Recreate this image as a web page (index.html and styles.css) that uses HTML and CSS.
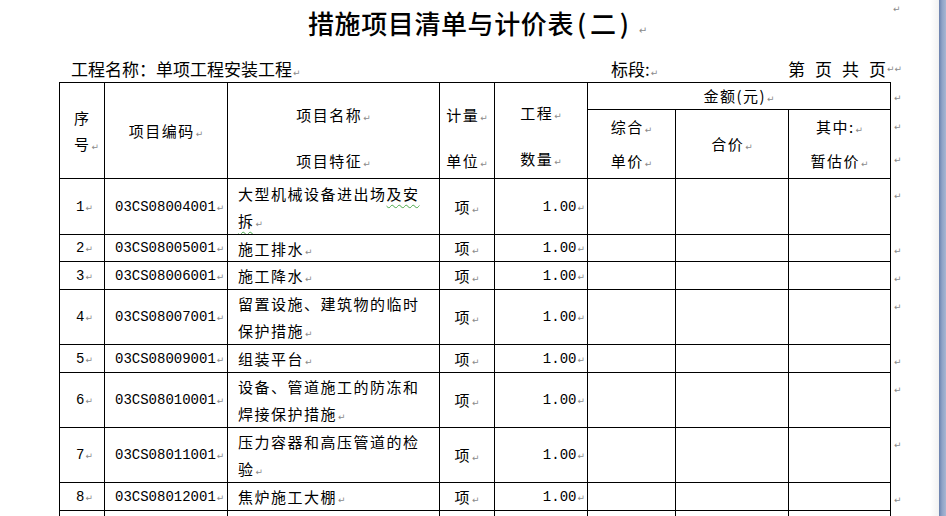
FILE: index.html
```html
<!DOCTYPE html>
<html lang="zh-CN">
<head>
<meta charset="utf-8">
<title>措施项目清单与计价表(二)</title>
<link rel="stylesheet" href="styles.css">
</head>
<body>
<div class="window">
  <main class="page">
    <div class="top-mark"><span class="pm">↵</span></div>
    <h1 class="title">措施项目清单与计价表<span class="paren">(</span>二<span class="paren">)</span><span class="pm">↵</span></h1>
    <div class="meta">
      <div class="meta-project">工程名称：单项工程安装工程<span class="pm">↵</span></div>
      <div class="meta-section">标段:<span class="pm">↵</span></div>
      <div class="meta-page"><span>第</span><span>页</span><span>共</span><span>页</span><span class="pm pm-pair">↵↵</span></div>
    </div>
    <table class="sheet">
      <colgroup>
        <col class="c-no"><col class="c-code"><col class="c-name"><col class="c-unit"><col class="c-qty"><col class="c-price"><col class="c-total"><col class="c-est"><col class="c-rm">
      </colgroup>
      <tr class="hr-a">
        <th rowspan="2" class="h-seq">序<br>号<span class="pm">↵</span></th>
        <th rowspan="2" class="h-code">项目编码<span class="pm">↵</span></th>
        <th rowspan="2" class="h-two"><div class="l1">项目名称<span class="pm">↵</span></div><div class="l2">项目特征<span class="pm">↵</span></div></th>
        <th rowspan="2" class="h-two"><div class="l1">计量<span class="pm">↵</span></div><div class="l2">单位<span class="pm">↵</span></div></th>
        <th rowspan="2" class="h-two h-qty"><div class="l1">工程<span class="pm">↵</span></div><div class="l2">数量<span class="pm">↵</span></div></th>
        <th colspan="3" class="h-amount">金额(元)<span class="pm">↵</span></th>
        <td class="rm rm-a"><span class="pm">↵</span></td>
      </tr>
      <tr class="hr-b">
        <th class="h-sub">综合<span class="pm">↵</span><br>单价<span class="pm">↵</span></th>
        <th class="h-mid">合价<span class="pm">↵</span></th>
        <th class="h-sub">其中:<span class="pm">↵</span><br>暂估价<span class="pm">↵</span></th>
        <td class="rm rm-b"><span class="pm">↵</span><br><span class="pm">↵</span></td>
      </tr>
      <tr class="r-first">
        <td class="no">1<span class="pm">↵</span></td>
        <td class="code">03CS08004001<span class="pm">↵</span></td>
        <td class="name">大型机械设备进出场<span class="spell">及安</span><br><span class="spell">拆</span><span class="pm">↵</span></td>
        <td class="unit">项<span class="pm">↵</span></td>
        <td class="qty">1.00<span class="pm">↵</span></td>
        <td></td><td></td><td></td>
        <td class="rm"><span class="pm">↵</span></td>
      </tr>
      <tr class="r1 r1-short">
        <td class="no">2<span class="pm">↵</span></td>
        <td class="code">03CS08005001<span class="pm">↵</span></td>
        <td class="name">施工排水<span class="pm">↵</span></td>
        <td class="unit">项<span class="pm">↵</span></td>
        <td class="qty">1.00<span class="pm">↵</span></td>
        <td></td><td></td><td></td>
        <td class="rm"><span class="pm">↵</span></td>
      </tr>
      <tr class="r1">
        <td class="no">3<span class="pm">↵</span></td>
        <td class="code">03CS08006001<span class="pm">↵</span></td>
        <td class="name">施工降水<span class="pm">↵</span></td>
        <td class="unit">项<span class="pm">↵</span></td>
        <td class="qty">1.00<span class="pm">↵</span></td>
        <td></td><td></td><td></td>
        <td class="rm"><span class="pm">↵</span></td>
      </tr>
      <tr class="r2">
        <td class="no">4<span class="pm">↵</span></td>
        <td class="code">03CS08007001<span class="pm">↵</span></td>
        <td class="name">留置设施、建筑物的临时<br>保护措施<span class="pm">↵</span></td>
        <td class="unit">项<span class="pm">↵</span></td>
        <td class="qty">1.00<span class="pm">↵</span></td>
        <td></td><td></td><td></td>
        <td class="rm"><span class="pm">↵</span></td>
      </tr>
      <tr class="r1">
        <td class="no">5<span class="pm">↵</span></td>
        <td class="code">03CS08009001<span class="pm">↵</span></td>
        <td class="name">组装平台<span class="pm">↵</span></td>
        <td class="unit">项<span class="pm">↵</span></td>
        <td class="qty">1.00<span class="pm">↵</span></td>
        <td></td><td></td><td></td>
        <td class="rm"><span class="pm">↵</span></td>
      </tr>
      <tr class="r2">
        <td class="no">6<span class="pm">↵</span></td>
        <td class="code">03CS08010001<span class="pm">↵</span></td>
        <td class="name">设备、管道施工的防冻和<br>焊接保护措施<span class="pm">↵</span></td>
        <td class="unit">项<span class="pm">↵</span></td>
        <td class="qty">1.00<span class="pm">↵</span></td>
        <td></td><td></td><td></td>
        <td class="rm"><span class="pm">↵</span></td>
      </tr>
      <tr class="r2">
        <td class="no">7<span class="pm">↵</span></td>
        <td class="code">03CS08011001<span class="pm">↵</span></td>
        <td class="name">压力容器和高压管道的检<br>验<span class="pm">↵</span></td>
        <td class="unit">项<span class="pm">↵</span></td>
        <td class="qty">1.00<span class="pm">↵</span></td>
        <td></td><td></td><td></td>
        <td class="rm"><span class="pm">↵</span></td>
      </tr>
      <tr class="r1">
        <td class="no">8<span class="pm">↵</span></td>
        <td class="code">03CS08012001<span class="pm">↵</span></td>
        <td class="name">焦炉施工大棚<span class="pm">↵</span></td>
        <td class="unit">项<span class="pm">↵</span></td>
        <td class="qty">1.00<span class="pm">↵</span></td>
        <td></td><td></td><td></td>
        <td class="rm"><span class="pm">↵</span></td>
      </tr>
      <tr class="r1">
        <td></td><td></td><td></td><td></td><td></td><td></td><td></td><td></td>
        <td class="rm"></td>
      </tr>
    </table>
  </main>
  <div class="edge"></div>
</div>
</body>
</html>
```
FILE: styles.css
```css
html, body {
  margin: 0;
  padding: 0;
  height: 516px;
  overflow: hidden;
  background: #fff;
}
body {
  font-family: "Noto Sans CJK SC", "Noto Sans", sans-serif;
  color: #000;
}
.window {
  display: flex;
  height: 516px;
}
.page {
  flex: 1;
  min-width: 0;
  padding-left: 59px;
  background: linear-gradient(to right, #fff calc(100% - 9px), #f1f1f1);
}
.edge {
  width: 7px;
  flex: none;
  background: linear-gradient(90deg, #6a80ac 0%, #90a3c7 45%, #a8b6d2 100%);
}
.pm {
  font-family: "DejaVu Sans", sans-serif;
  font-size: 9px;
  font-weight: 400;
  line-height: 0;
  color: #8a8a8a;
  letter-spacing: 0;
  margin-left: 1px;
}
.top-mark {
  height: 8px;
  line-height: 10px;
  padding-left: 833px;
}
.title {
  margin: 0;
  height: 30px;
  line-height: 30px;
  padding-left: 249px;
  font-size: 26px;
  font-weight: 500;
  letter-spacing: 0.6px;
  white-space: nowrap;
}
.title .pm {
  font-size: 10px;
  margin-left: 6px;
}
.paren {
  display: inline-block;
  width: 16px;
  text-align: center;
}
.meta {
  margin-top: 20px;
  height: 22px;
  line-height: 22px;
  display: grid;
  grid-template-columns: 540px 177px auto;
  padding-left: 12px;
  font-size: 17px;
  white-space: nowrap;
}
.meta-page {
  display: flex;
  gap: 10px;
}
.meta .pm-pair {
  margin-left: -9px;
  line-height: 22px;
  letter-spacing: 0;
}
.sheet {
  margin-top: 2px;
  border-collapse: collapse;
  table-layout: fixed;
  width: 848px;
  font-size: 15px;
  letter-spacing: 1.5px;
}
.c-no { width: 45px; }
.c-code { width: 123px; }
.c-name { width: 212px; }
.c-unit { width: 55px; }
.c-qty { width: 93px; }
.c-price { width: 88px; }
.c-total { width: 113px; }
.c-est { width: 102px; }
.c-rm { width: 17px; }
.sheet th, .sheet td {
  border: 1px solid #000;
  padding: 0;
  font-weight: 400;
  line-height: 24px;
  vertical-align: middle;
  overflow: hidden;
}
.sheet td.rm {
  border: none;
  vertical-align: top;
  padding-left: 2px;
  line-height: 27px;
  white-space: nowrap;
}
.sheet td.rm-a {
  line-height: 24px;
}
.sheet td.rm-b {
  line-height: 33px;
}
.sheet td.rm-b .pm {
  position: relative;
  top: -3px;
}
.hr-a { height: 27px; }
.hr-b { height: 67px; }
.r-first { height: 56px; }
.r1 { height: 28px; }
.r1.r1-short { height: 27px; }
.r2 { height: 55px; }
.sheet .h-seq {
  text-align: left;
  padding-left: 14px;
  line-height: 26px;
}
.h-code {
  text-align: center;
}
.sheet .h-two {
  vertical-align: top;
  text-align: center;
  padding-top: 9px;
}
.h-two .l1 {
  height: 46px;
  line-height: 46px;
}
.h-two .l2 {
  height: 36px;
  line-height: 46px;
}
.sheet .h-qty {
  padding-top: 7px;
}
.h-amount {
  text-align: center;
}
.sheet .h-sub {
  vertical-align: top;
  text-align: center;
  line-height: 34px;
}
.h-mid {
  text-align: center;
}
.sheet .no {
  text-align: right;
  padding-right: 11px;
  font-family: "Liberation Mono", monospace;
  font-size: 14px;
  letter-spacing: 0;
}
.sheet .code {
  padding-left: 10px;
  font-family: "Liberation Mono", monospace;
  font-size: 14px;
  letter-spacing: 0;
  white-space: nowrap;
}
.sheet .name {
  padding-left: 10px;
  line-height: 27px;
  text-align: left;
  white-space: nowrap;
}
.sheet .r1-short .name,
.sheet .r1-short .rm {
  line-height: 25px;
}
.unit {
  text-align: center;
}
.sheet .qty {
  text-align: right;
  padding-right: 2px;
  font-family: "Liberation Mono", monospace;
  font-size: 14px;
  letter-spacing: 0;
}
.spell {
  text-decoration: underline wavy #4aa84a;
  text-decoration-thickness: 1px;
  text-underline-offset: 4px;
}
```
